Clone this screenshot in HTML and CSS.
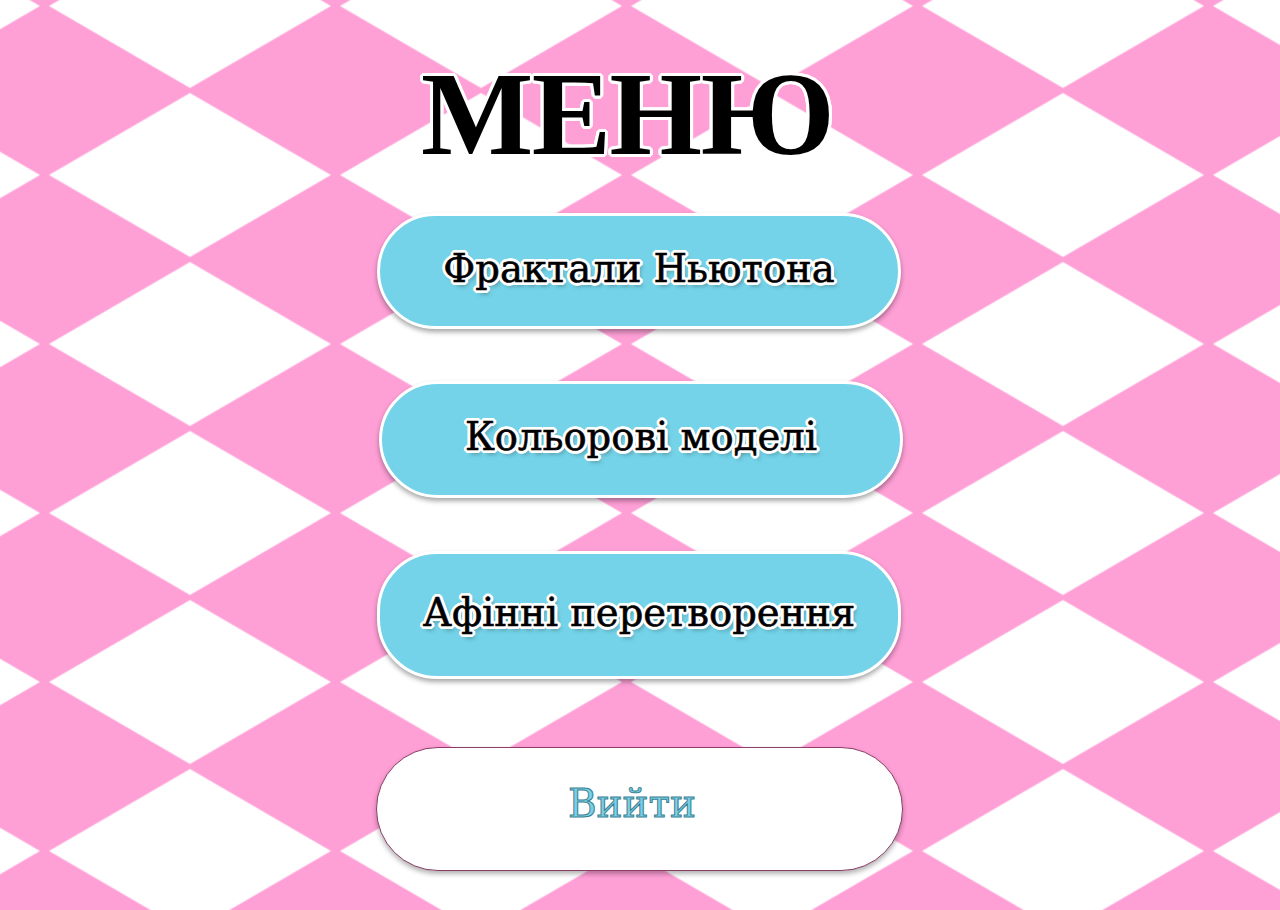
FILE: index.html
```html
<!DOCTYPE html>
<html lang="uk">
<head>
<meta charset="utf-8">
<title>Меню</title>
<link rel="stylesheet" href="styles.css">
</head>
<body>
<svg class="backdrop" aria-hidden="true" width="1280" height="910">
  <defs>
    <pattern id="argyle" patternUnits="userSpaceOnUse" x="44.5" y="90.5" width="291" height="169">
      <rect width="291" height="169" fill="#fe9fd6"/>
      <polygon points="4.5,84.5 145.5,2.5 286.5,84.5 145.5,166.5" fill="#ffffff"/>
    </pattern>
  </defs>
  <rect width="1280" height="910" fill="url(#argyle)"/>
</svg>
<main class="menu">
  <h1 class="menu-title">МЕНЮ</h1>
  <nav class="menu-list">
    <button class="menu-btn btn-newton" type="button">Фрактали Ньютона</button>
    <button class="menu-btn btn-colors" type="button">Кольорові моделі</button>
    <button class="menu-btn btn-affine" type="button">Афінні перетворення</button>
    <button class="exit-btn" type="button">Вийти</button>
  </nav>
</main>
</body>
</html>
```
FILE: styles.css
```css
html, body {
  margin: 0;
  padding: 0;
  width: 1280px;
  height: 910px;
  overflow: hidden;
}

body {
  background: #fe9fd6;
  font-family: "DejaVu Serif", "Liberation Serif", serif;
  position: relative;
}

.backdrop {
  position: absolute;
  left: 0;
  top: 0;
  z-index: 0;
  display: block;
}

.menu {
  position: relative;
  z-index: 1;
  display: flex;
  flex-direction: column;
  align-items: center;
  padding-top: 55px;
}

.menu-title {
  margin: 0 26px 0 0;
  font-family: "Liberation Serif", "DejaVu Serif", serif;
  font-weight: 700;
  font-size: 119px;
  line-height: 119px;
  height: 119px;
  letter-spacing: -1.5px;
  color: #000;
  text-shadow:
    3px 0 0 #fff, -3px 0 0 #fff, 0 3px 0 #fff, 0 -3px 0 #fff,
    2px 2px 0 #fff, -2px -2px 0 #fff, 2px -2px 0 #fff, -2px 2px 0 #fff,
    3px 1px 0 #fff, -3px 1px 0 #fff, 3px -1px 0 #fff, -3px -1px 0 #fff,
    1px 3px 0 #fff, -1px 3px 0 #fff, 1px -3px 0 #fff, -1px -3px 0 #fff;
}

.menu-list {
  display: flex;
  flex-direction: column;
  align-items: center;
  margin-top: 39px;
}

.menu-btn {
  box-sizing: border-box;
  width: 524px;
  height: 116px;
  border: 3px solid #ffffff;
  border-radius: 60px;
  background: #74d3e8;
  box-shadow: 0 3px 5px rgba(0, 0, 0, 0.35);
  font-family: "DejaVu Serif", "Liberation Serif", serif;
  font-size: 38.5px;
  color: #000;
  padding: 0 0 6px 0;
  cursor: pointer;
  text-shadow:
    3px 0 0 #fff, -3px 0 0 #fff, 0 3px 0 #fff, 0 -3px 0 #fff,
    2px 2px 0 #fff, -2px -2px 0 #fff, 2px -2px 0 #fff, -2px 2px 0 #fff,
    3px 1px 0 #fff, -3px 1px 0 #fff, 3px -1px 0 #fff, -3px -1px 0 #fff,
    1px 3px 0 #fff, -1px 3px 0 #fff, 1px -3px 0 #fff, -1px -3px 0 #fff,
    3px 4px 4px rgba(0, 0, 0, 0.35);
  -webkit-text-stroke: 0.6px #000;
}

.btn-newton {
  transform: translateX(-1px);
}

.btn-colors {
  height: 117px;
  margin-top: 52px;
  transform: translateX(1px);
}

.btn-affine {
  height: 128px;
  margin-top: 53px;
  transform: translateX(-1px);
}

.exit-btn {
  box-sizing: border-box;
  width: 527px;
  height: 124px;
  margin-top: 68px;
  border: 1.5px solid #8d3d66;
  border-radius: 62px;
  background: #ffffff;
  box-shadow: 0 3px 5px rgba(0, 0, 0, 0.3);
  font-family: "DejaVu Serif", "Liberation Serif", serif;
  font-size: 39px;
  color: #7bd0e5;
  padding: 0 14px 12px 0;
  cursor: pointer;
  transform: translateX(-1px);
  -webkit-text-stroke: 1px #3a7f92;
}
```
